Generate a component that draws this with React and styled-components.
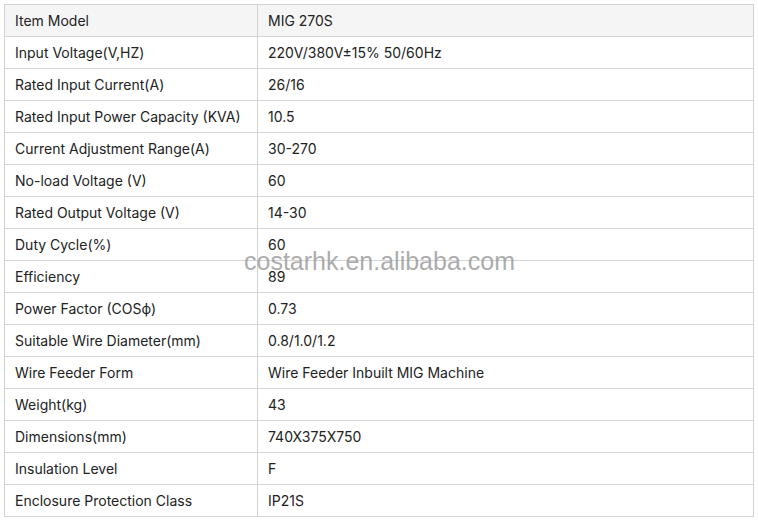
import React from "react";
import styled, { createGlobalStyle } from "styled-components";

const Global = createGlobalStyle`
  html, body { margin: 0; padding: 0; background: #fff; }
  body { font-family: Inter, "Noto Sans", sans-serif; }
`;

const Page = styled.div`
  position: relative;
  padding: 4px 0 0 4px;
  width: 758px;
  height: 522px;
  box-sizing: border-box;
`;

const Table = styled.table`
  border-collapse: collapse;
  width: 750px;
  table-layout: fixed;
  font-size: 14px;
  color: #222;
`;

const Row = styled.tr`
  height: 32px;
  background: ${(p) => (p.$head ? "#f5f5f5" : "#fff")};
`;

const Cell = styled.td`
  border: 1px solid #d3d3d3;
  padding: 0 0 0 10px;
  vertical-align: middle;
  white-space: nowrap;
  width: ${(p) => p.$w || "auto"};
  line-height: 20px;
`;

const Watermark = styled.div`
  position: absolute;
  left: 244px;
  top: 247px;
  font-family: "Liberation Sans", Arial, sans-serif;
  font-size: 25px;
  color: rgba(150, 150, 150, 0.8);
  pointer-events: none;
`;

const rows = [
  ["Item Model", "MIG 270S"],
  ["Input Voltage(V,HZ)", "220V/380V±15% 50/60Hz"],
  ["Rated Input Current(A)", "26/16"],
  ["Rated Input Power Capacity (KVA)", "10.5"],
  ["Current Adjustment Range(A)", "30-270"],
  ["No-load Voltage (V)", "60"],
  ["Rated Output Voltage (V)", "14-30"],
  ["Duty Cycle(%)", "60"],
  ["Efficiency", "89"],
  ["Power Factor (COSф)", "0.73"],
  ["Suitable Wire Diameter(mm)", "0.8/1.0/1.2"],
  ["Wire Feeder Form", "Wire Feeder Inbuilt MIG Machine"],
  ["Weight(kg)", "43"],
  ["Dimensions(mm)", "740X375X750"],
  ["Insulation Level", "F"],
  ["Enclosure Protection Class", "IP21S"],
];

export default function App() {
  return (
    <Page>
      <Global />
      <Table>
        <tbody>
          {rows.map(([k, v], i) => (
            <Row key={i} $head={i === 0}>
              <Cell $w="242px">{k}</Cell>
              <Cell>{v}</Cell>
            </Row>
          ))}
        </tbody>
      </Table>
      <Watermark>costarhk.en.alibaba.com</Watermark>
    </Page>
  );
}
